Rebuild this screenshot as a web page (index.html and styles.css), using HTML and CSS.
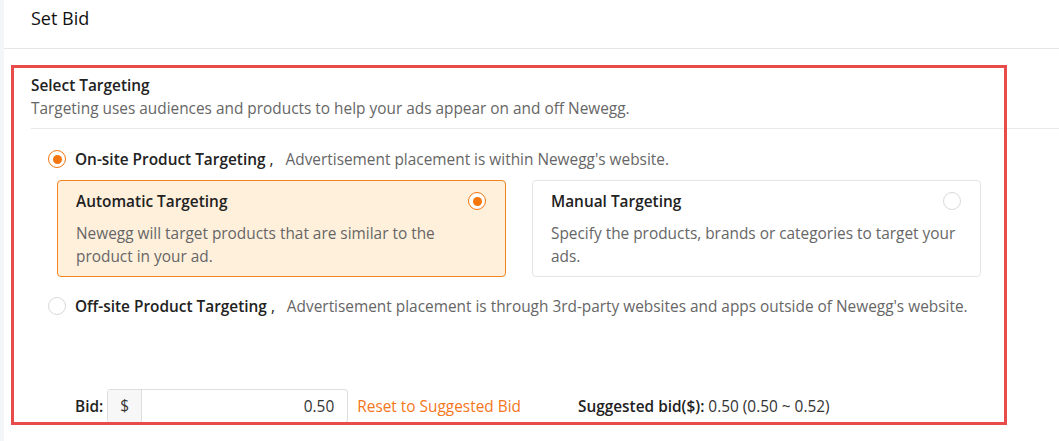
FILE: index.html
```html
<!DOCTYPE html>
<html lang="en">
<head>
    <meta charset="UTF-8">
    <meta name="viewport" content="width=device-width, initial-scale=1.0">
    <title>Set Bid</title>
    <link rel="stylesheet" href="styles.css">
</head>
<body>
    <div class="panel">
        <div class="panel-header">Set Bid</div>

        <div class="section-head">
            <div class="section-title">Select Targeting</div>
            <div class="section-desc">Targeting uses audiences and products to help your ads appear on and off Newegg.</div>
        </div>

        <div class="options">
            <label class="option">
                <span class="radio checked"></span>
                <span class="option-name">On-site Product Targeting</span>
                <span class="option-comma">,</span>
                <span class="option-desc">Advertisement placement is within Newegg's website.</span>
            </label>

            <div class="cards">
                <div class="card active">
                    <div class="card-top">
                        <span class="card-title">Automatic Targeting</span>
                        <span class="radio checked"></span>
                    </div>
                    <p class="card-desc">Newegg will target products that are similar to the product in your ad.</p>
                </div>
                <div class="card">
                    <div class="card-top">
                        <span class="card-title">Manual Targeting</span>
                        <span class="radio"></span>
                    </div>
                    <p class="card-desc">Specify the products, brands or categories to target your ads.</p>
                </div>
            </div>

            <label class="option">
                <span class="radio"></span>
                <span class="option-name">Off-site Product Targeting</span>
                <span class="option-comma">,</span>
                <span class="option-desc">Advertisement placement is through 3rd-party websites and apps outside of Newegg's website.</span>
            </label>
        </div>

        <div class="bid-row">
            <span class="bid-label">Bid:</span>
            <div class="input-group">
                <span class="addon">$</span>
                <input class="bid-input" type="text" value="0.50">
            </div>
            <a class="reset-link" href="#">Reset to Suggested Bid</a>
            <span class="suggested"><b>Suggested bid($):</b> 0.50 (0.50 ~ 0.52)</span>
        </div>
    </div>

    <!-- annotation frame -->
    <div class="highlight"></div>
</body>
</html>
```

FILE: styles.css
```css
body {
    margin: 0;
    padding: 0;
    font-family: "Open Sans", Arial, sans-serif;
    font-size: 15.4px;
    color: #333;
    background: #f3f5f8;
    overflow: hidden;
}

.panel {
    margin-left: 4px;
    background: #fff;
    min-height: 100vh;
}

.panel-header {
    height: 36px;
    padding: 0 0 12px 27px;
    line-height: 36px;
    font-size: 18px;
    color: #111;
    border-bottom: 1px solid #e6e6e6;
}

.section-head {
    margin-left: 27px;
    padding: 25px 0 8px;
    border-bottom: 1px solid #e8e8e8;
}

.section-title {
    font-weight: 600;
    color: #222;
    line-height: 24px;
}

.section-desc {
    color: #666;
    line-height: 22px;
}

.options {
    padding: 19px 0 0 44px;
}

.option {
    display: flex;
    align-items: center;
    height: 22px;
    cursor: pointer;
}

.option-name {
    margin-left: 9px;
    font-weight: 600;
    color: #222;
}

.option-comma {
    margin: 0 12px 0 4px;
    color: #222;
}

.option-desc {
    color: #666;
}

.radio {
    box-sizing: border-box;
    width: 18px;
    height: 18px;
    border: 1px solid #d9d9d9;
    border-radius: 50%;
    background: #fff;
    position: relative;
    flex-shrink: 0;
}

.radio.checked {
    border-color: #f5750f;
}

.radio.checked::after {
    content: "";
    position: absolute;
    left: 3.5px;
    top: 3.5px;
    width: 9px;
    height: 9px;
    border-radius: 50%;
    background: #f5750f;
}

.cards {
    display: flex;
    gap: 26px;
    margin: 10px 0 0 9px;
    width: 924px;
}

.card {
    box-sizing: border-box;
    flex: 1;
    height: 97px;
    border: 1px solid #e6e6e6;
    border-radius: 4px;
    padding: 10px 19px 0 18px;
}

.card.active {
    background: #fff0dc;
    border-color: #f5841f;
}

.card-top {
    display: flex;
    justify-content: space-between;
    align-items: center;
    height: 20px;
}

.card-title {
    font-weight: 600;
    color: #222;
}

.card-desc {
    margin: 11px 0 0;
    color: #666;
    line-height: 23px;
    padding-right: 3px;
}

.cards + .option {
    margin-top: 18px;
}

.bid-row {
    display: flex;
    align-items: center;
    margin: 72px 0 0 71px;
}

.bid-label {
    font-weight: 600;
    color: #222;
    margin-right: 4px;
}

.input-group {
    display: flex;
    width: 241px;
    height: 34px;
    box-sizing: border-box;
    border: 1px solid #dedede;
    border-radius: 3px;
}

.addon {
    width: 33px;
    background: #f7f7f7;
    border-right: 1px solid #dedede;
    text-align: center;
    line-height: 32px;
    color: #333;
}

.bid-input {
    flex: 1;
    min-width: 0;
    border: none;
    outline: none;
    text-align: right;
    padding: 0 13px 0 0;
    font-family: inherit;
    font-size: 15.4px;
    color: #333;
    background: transparent;
}

.reset-link {
    margin-left: 9px;
    color: #f5761a;
    text-decoration: none;
}

.suggested {
    margin-left: 57px;
    color: #333;
}

.suggested b {
    font-weight: 600;
    color: #222;
}

.highlight {
    position: absolute;
    left: 11px;
    top: 65px;
    width: 990px;
    height: 354px;
    border: 3px solid #e84c4a;
    pointer-events: none;
}
```
